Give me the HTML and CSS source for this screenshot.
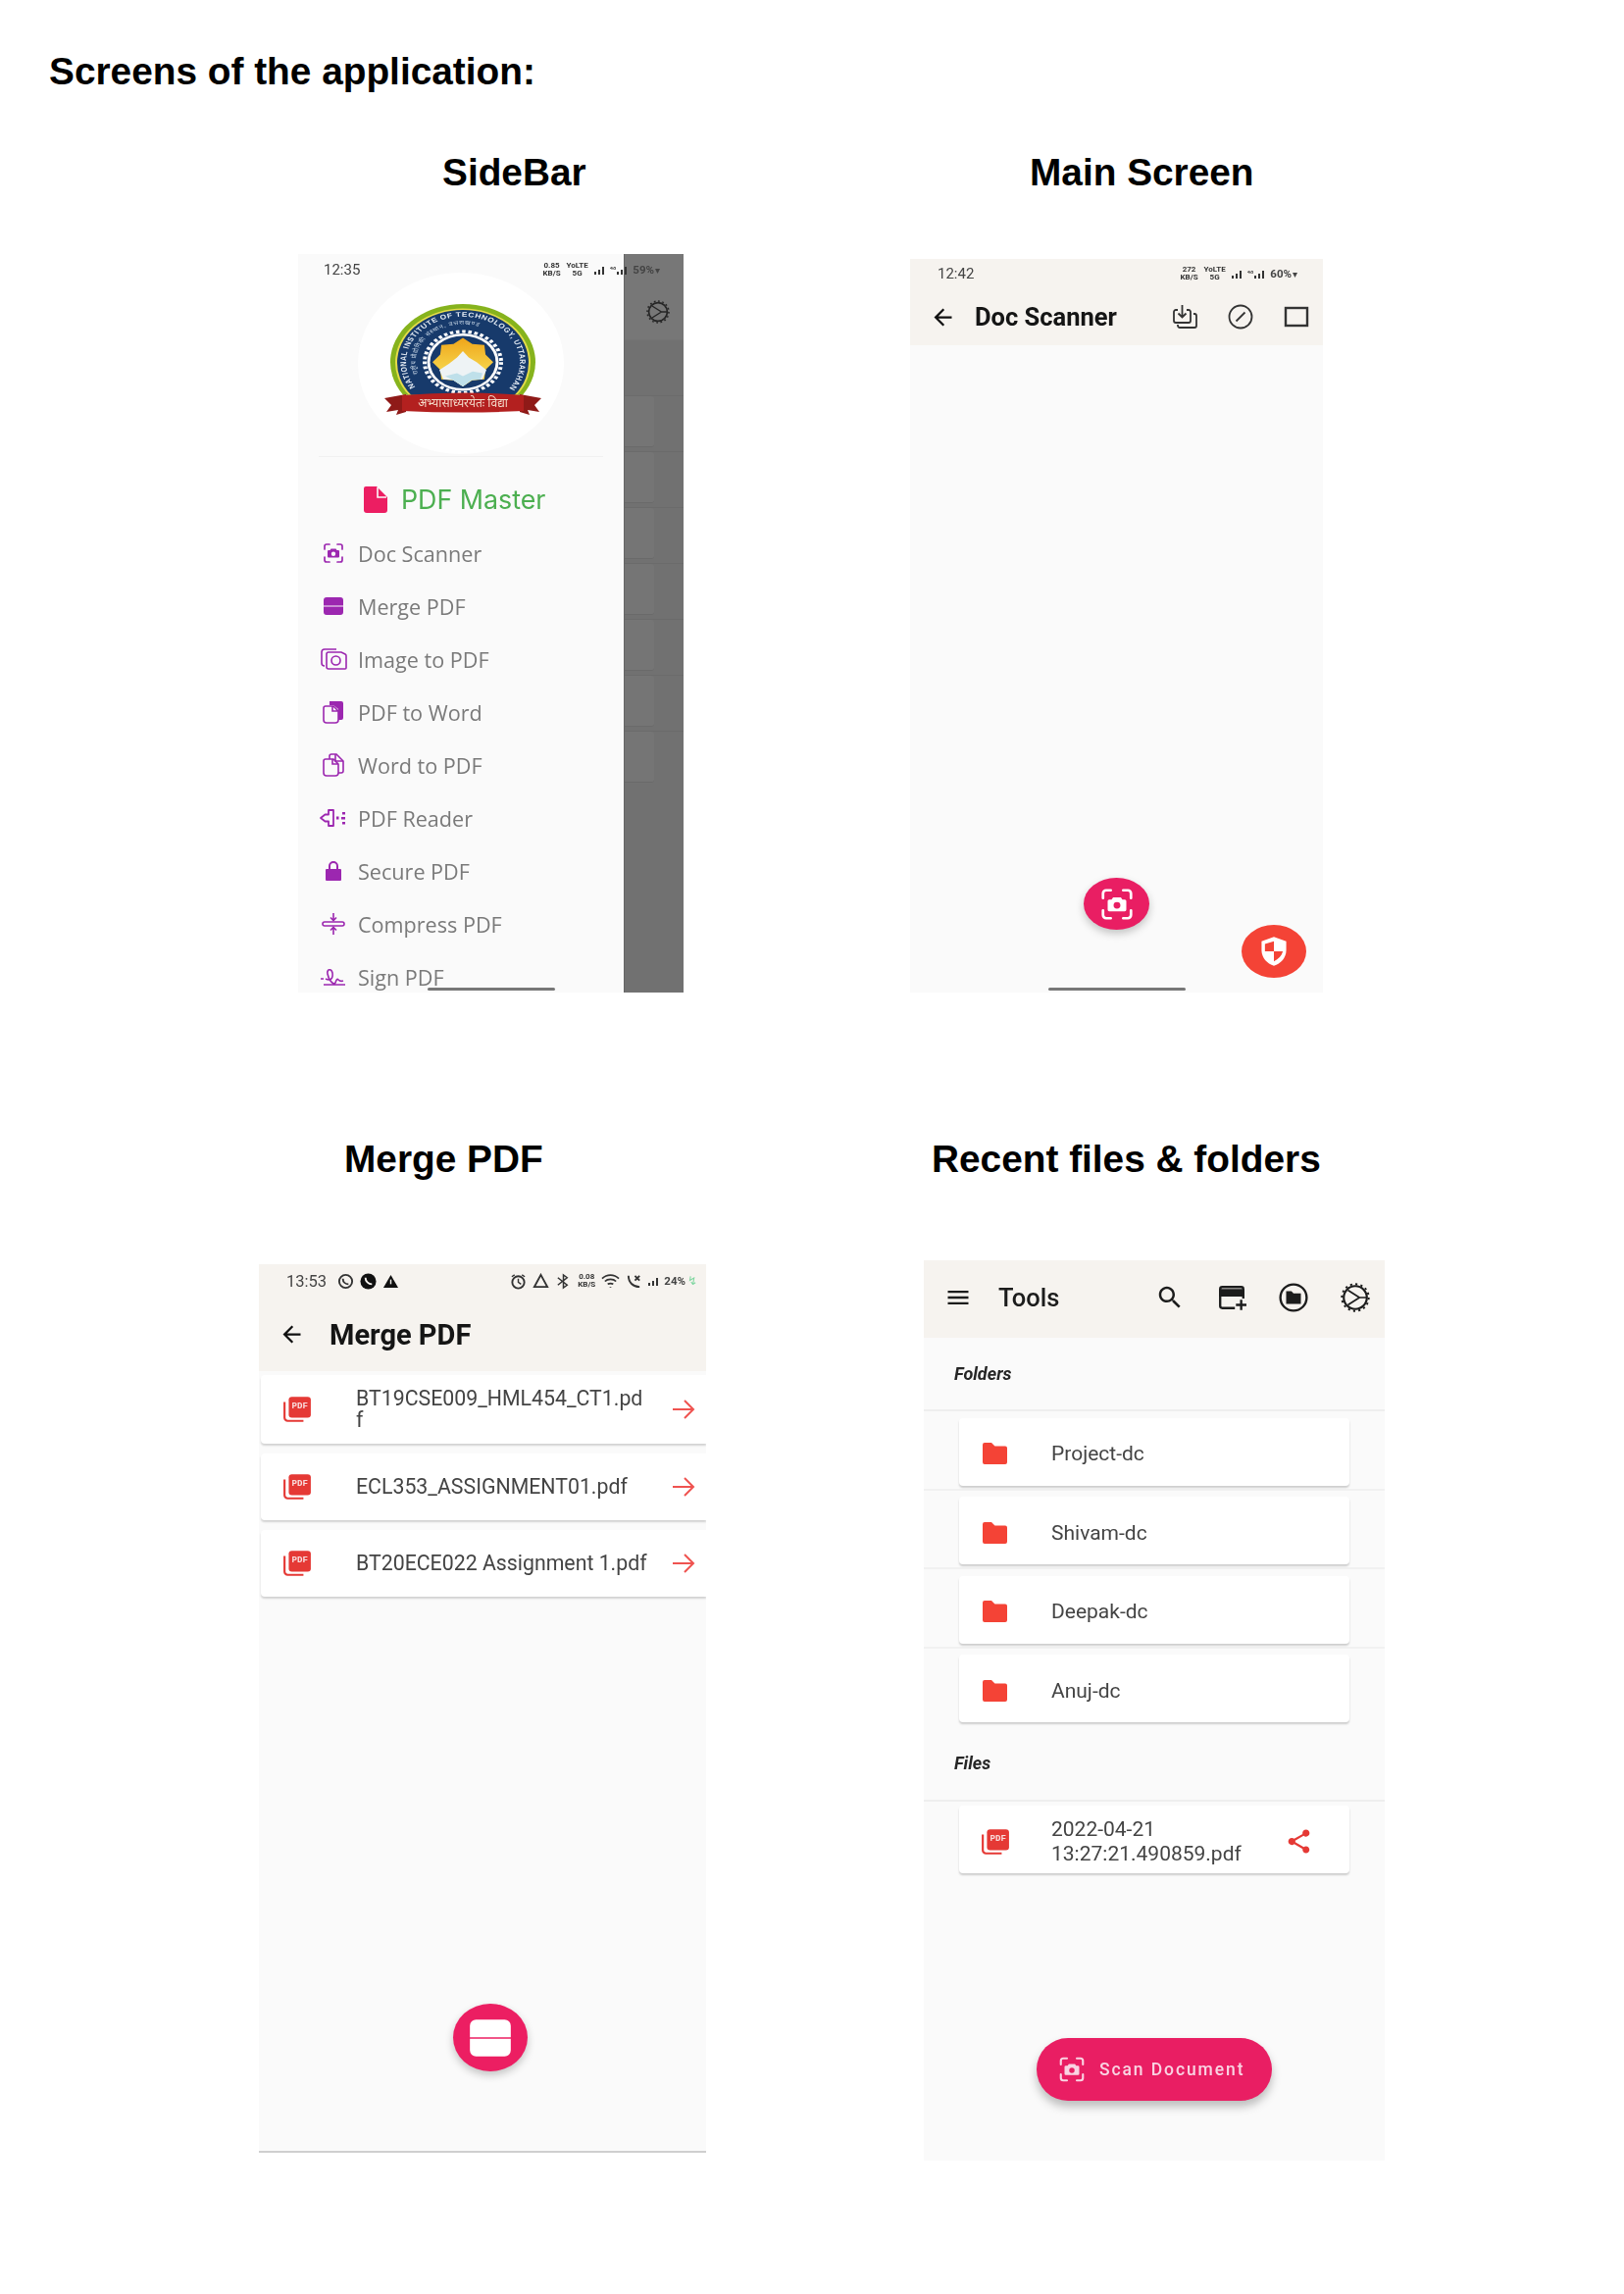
FILE: index.html
```html
<!DOCTYPE html>
<html lang="en">
<head>
    <meta charset="UTF-8">
    <meta name="viewport" content="width=device-width, initial-scale=1.0">
    <title>Screens of the application</title>
    <link rel="stylesheet" href="styles.css">
</head>
<body>
    <svg class="defs" width="0" height="0">
        <symbol id="i-back" viewBox="0 0 24 24"><path d="M20 11H7.830l5.590-5.590L12 4l-8 8 8 8 1.410-1.410L7.830 13H20v-2z"/></symbol>
        <symbol id="i-scan" viewBox="0 0 24 24">
            <path d="M3 8V5a2 2 0 0 1 2-2h3M16 3h3a2 2 0 0 1 2 2v3M21 16v3a2 2 0 0 1-2 2h-3M8 21H5a2 2 0 0 1-2-2v-3" fill="none" stroke="currentColor" stroke-width="1.700" stroke-linecap="round"/>
            <path fill="currentColor" fill-rule="evenodd" d="M9.500 7.500l-1 1.500H7a1 1 0 0 0-1 1v5.500a1 1 0 0 0 1 1h10a1 1 0 0 0 1-1V10a1 1 0 0 0-1-1h-1.500l-1-1.500zM12 10.500a2.200 2.200 0 1 1 0 4.400 2.200 2.200 0 0 1 0-4.400z"/>
        </symbol>
        <symbol id="i-merge" viewBox="0 0 24 24"><path fill="currentColor" d="M5 3h14a3 3 0 0 1 3 3v5.600H2V6a3 3 0 0 1 3-3zM2 12.400h20V18a3 3 0 0 1-3 3H5a3 3 0 0 1-3-3z"/></symbol>
        <symbol id="i-next" viewBox="0 0 24 24"><path d="M1 12h21M13 3l9 9-9 9" fill="none" stroke="#ef5350" stroke-width="2"/></symbol>
        <symbol id="i-folder" viewBox="0 0 27 24"><path fill="#f44336" d="M3 1h7l3.500 3.500H24a2 2 0 0 1 2 2V21a2 2 0 0 1-2 2H3a2 2 0 0 1-2-2V3a2 2 0 0 1 2-2z"/></symbol>
        <symbol id="i-gear" viewBox="0 0 28 28">
            <circle cx="14" cy="14" r="11" fill="none" stroke="currentColor" stroke-width="2"/>
            <circle cx="14" cy="14" r="12.800" fill="none" stroke="currentColor" stroke-width="1.800" stroke-dasharray="2 3"/>
            <path d="M7 7l11 7-11 7M18 14h7" fill="none" stroke="currentColor" stroke-width="1.600"/>
        </symbol>
    </svg>

    <h1 class="title">Screens of the application:</h1>

    <section class="row">
        <div class="col">
            <h2 class="heading heading-sidebar">SideBar</h2>
            <div class="phone phone-sidebar">
                <div class="scrim">
                    <div class="scrim-head"></div>
                    <div class="ghost"><i></i></div>
                    <div class="ghost"><i></i></div>
                    <div class="ghost"><i></i></div>
                    <div class="ghost"><i></i></div>
                    <div class="ghost"><i></i></div>
                    <div class="ghost"><i></i></div>
                    <div class="ghost"><i></i></div>
                </div>
                <svg class="scrim-gear"><use href="#i-gear"/></svg>
                <div class="status status-sidebar">
                    <span class="time">12:35</span>
                    <span class="stat-right">
                        <span class="speed">0.85<br>KB/S</span><span class="speed">YoLTE<br>5G</span>
                        <span class="bars"><b></b><b></b><b></b></span><span class="tiny">⁴⁶</span><span class="bars"><b></b><b></b><b></b></span>
                        <span class="pct">59%</span><span class="batt">▾</span>
                    </span>
                </div>
                <nav class="drawer">
                    <div class="logo-wrap">
                        <div class="logo">
                            <svg class="emblem" viewBox="0 0 160 113">
                                <defs>
                                    <linearGradient id="sun" x1="0" y1="0" x2="0" y2="1">
                                        <stop offset="0" stop-color="#efa51a"/>
                                        <stop offset="0.6" stop-color="#f5cf45"/>
                                    </linearGradient>
                                    <path id="ring-outer" d="M33 108A58 58 0 1 1 127 108"/>
                                    <path id="ring-inner" d="M42.500 104A48 48 0 1 1 117.500 104"/>
                                </defs>
                                <g transform="scale(1 .8)">
                                    <path d="M19.100 116A74 74 0 1 1 140.900 116z" fill="#86b31d"/>
                                    <path d="M24.800 116A69 69 0 1 1 135.200 116z" fill="#e4dc4a"/>
                                    <path d="M27.300 116A67 67 0 1 1 132.700 116z" fill="#173a6b"/>
                                    <text class="ring-label"><textPath href="#ring-outer" startOffset="1%">NATIONAL INSTITUTE OF TECHNOLOGY, UTTARAKHAND</textPath></text>
                                    <text class="ring-hindi"><textPath href="#ring-inner" startOffset="8%">राष्ट्रीय प्रौद्योगिकी संस्थान, उत्तराखण्ड</textPath></text>
                                    <circle cx="80" cy="74" r="39" fill="none" stroke="#fff" stroke-width="4" stroke-dasharray="3.500 2.800"/>
                                    <circle cx="80" cy="74" r="36.500" fill="#fff"/>
                                    <circle cx="80" cy="74" r="33.500" fill="#173a6b"/>
                                    <polygon fill="url(#sun)" points="80,43 89.600,50.900 101.900,52.100 103.100,64.400 111,74 103.100,83.600 101.900,95.900 89.600,97.100 80,105 70.400,97.100 58.100,95.900 56.900,83.600 49,74 56.900,64.400 58.100,52.100 70.400,50.900"/>
                                    <polygon fill="#eef3f5" points="56,84 66,76 74,68 80,60 86,68 94,74 104,84 100,96 89,97 80,105 70,97 60,96"/>
                                    <polygon fill="#bfe0ea" points="62,92 74,88 80,92 90,86 100,88 98,96 89,97 80,105 70,97"/>
                                </g>
                                <path d="M0 96l22-4v18l-10 3 2-5-12 2 5-7z" fill="#8f1a18"/>
                                <path d="M160 96l-22-4v18l10 3-2-5 12 2-5-7z" fill="#8f1a18"/>
                                <path d="M18 93q62-5 124 0v16q-62 3-124 0z" fill="#b3201f"/>
                                <text x="80" y="105" class="ribbon-label">अभ्यासाध्यरयेतः विद्या</text>
                            </svg>
                        </div>
                    </div>
                    <div class="brand">
                        <svg class="brand-icon" viewBox="0 0 24 27"><path fill="#ec1e62" d="M2 0h11l11 11v13a3 3 0 0 1-3 3H3a3 3 0 0 1-3-3V2a2 2 0 0 1 2-2z"/><path d="M14 1v10h9" fill="none" stroke="#fafafa" stroke-width="1.600"/></svg>
                        <span>PDF Master</span>
                    </div>
                    <a class="menu-item"><svg class="menu-icon"><use href="#i-scan"/></svg>Doc Scanner</a>
                    <a class="menu-item"><svg class="menu-icon"><use href="#i-merge"/></svg>Merge PDF</a>
                    <a class="menu-item">
                        <svg class="menu-icon" viewBox="0 0 28 24"><g fill="none" stroke="currentColor" stroke-width="1.600"><path d="M5 19a3 3 0 0 1-3-3V5a3 3 0 0 1 3-3h12"/><path d="M9 5h13l4 2a2 2 0 0 1 1 2v12a1 1 0 0 1-1 1H9a2 2 0 0 1-2-2V7a2 2 0 0 1 2-2z"/><circle cx="16.500" cy="13.500" r="4.500"/></g></svg>
                        Image to PDF
                    </a>
                    <a class="menu-item">
                        <svg class="menu-icon" viewBox="0 0 24 24"><path fill="currentColor" d="M8 1h12a2 2 0 0 1 2 2v15a2 2 0 0 1-2 2h-3V9l-5-4H8z"/><path d="M4 6h8l5 5v9a3 3 0 0 1-3 3H5a3 3 0 0 1-3-3V8a2 2 0 0 1 2-2zM11 6v5h6" fill="none" stroke="currentColor" stroke-width="1.600"/></svg>
                        PDF to Word
                    </a>
                    <a class="menu-item">
                        <svg class="menu-icon" viewBox="0 0 24 24"><g fill="none" stroke="currentColor" stroke-width="1.600"><path d="M8 6V3a2 2 0 0 1 2-2h5l7 7v10a2 2 0 0 1-2 2h-3"/><path d="M14 1v7h8"/><path d="M4 6h8l5 5v9a3 3 0 0 1-3 3H5a3 3 0 0 1-3-3V8a2 2 0 0 1 2-2zM11 6v5h6"/></g></svg>
                        Word to PDF
                    </a>
                    <a class="menu-item">
                        <svg class="menu-icon" viewBox="0 0 28 24"><path d="M1 12l4.500-3.500H9V4l5 0v16l-5 0v-4.500H5.500z" fill="none" stroke="currentColor" stroke-width="1.800" stroke-linejoin="round"/><path fill="currentColor" d="M17 10.500h2.500v3H17zM23 6h3v2.500h-3zM22 11h4v2.500h-4zM23 16h3v2.500h-3z"/></svg>
                        PDF Reader
                    </a>
                    <a class="menu-item">
                        <svg class="menu-icon" viewBox="0 0 24 24"><path d="M8 11V7a4 4 0 0 1 8 0v4" fill="none" stroke="currentColor" stroke-width="2"/><path fill="currentColor" d="M5 10h14a1 1 0 0 1 1 1v10a1 1 0 0 1-1 1H5a1 1 0 0 1-1-1V11a1 1 0 0 1 1-1z"/></svg>
                        Secure PDF
                    </a>
                    <a class="menu-item">
                        <svg class="menu-icon" viewBox="0 0 24 24"><g fill="none" stroke="currentColor" stroke-width="1.600"><rect x="1" y="10" width="22" height="4" rx="2"/><path d="M12 1v7M9 5.500L12 8.500l3-3M12 23v-7M9 18.500l3-3 3 3"/></g></svg>
                        Compress PDF
                    </a>
                    <a class="menu-item">
                        <svg class="menu-icon" viewBox="0 0 28 24"><path d="M1 14h3M6 14c4 2 8 1 7-6-1-5-6-4-5 1 1 6 6 12 8 9 1-3 2-5 3-3 1 1 2 2 5 1M4 20h22" fill="none" stroke="currentColor" stroke-width="1.600"/></svg>
                        Sign PDF
                    </a>
                </nav>
                <div class="home-bar home-sidebar"></div>
            </div>
        </div>

        <div class="col">
            <h2 class="heading heading-main">Main Screen</h2>
            <div class="phone phone-main">
                <div class="appbar appbar-main">
                    <div class="status status-main">
                        <span class="time">12:42</span>
                        <span class="stat-right">
                            <span class="speed">272<br>KB/S</span><span class="speed">YoLTE<br>5G</span>
                            <span class="bars"><b></b><b></b><b></b></span><span class="tiny">⁴⁶</span><span class="bars"><b></b><b></b><b></b></span>
                            <span class="pct">60%</span><span class="batt">▾</span>
                        </span>
                    </div>
                    <div class="bar-row">
                        <svg class="bar-back"><use href="#i-back"/></svg>
                        <span class="bar-title">Doc Scanner</span>
                        <span class="bar-actions">
                            <svg class="bar-icon" viewBox="0 0 28 28"><path d="M7 7H5a2 2 0 0 0-2 2v9a2 2 0 0 0 2 2h13a2 2 0 0 0 2-2V9a2 2 0 0 0-2-2h-2M11.500 2v12M7.500 10.500l4 4 4-4M23 11h1a2 2 0 0 1 2 2v10a2 2 0 0 1-2 2H9a2 2 0 0 1-2-2v-1" fill="none" stroke="#333" stroke-width="1.800"/></svg>
                            <svg class="bar-icon" viewBox="0 0 28 28"><circle cx="14" cy="14" r="11.500" fill="none" stroke="#333" stroke-width="1.800"/><path d="M9.500 18.500l9-9" stroke="#333" stroke-width="1.800"/></svg>
                            <svg class="bar-icon" viewBox="0 0 28 28"><rect x="3" y="5" width="22" height="18" fill="none" stroke="#333" stroke-width="2.400"/></svg>
                        </span>
                    </div>
                </div>
                <div class="fab fab-scan"><svg><use href="#i-scan"/></svg></div>
                <div class="fab fab-shield">
                    <svg viewBox="0 0 24 28"><path fill="#fff" d="M12 1l11 4v8c0 7-5 12-11 14C6 25 1 20 1 13V5z"/><path fill="#f44336" d="M12 5v9H4V7.500zM12 14h8c-1 4-4 7-8 9z"/></svg>
                </div>
                <div class="home-bar home-main"></div>
            </div>
        </div>
    </section>

    <section class="row row-second">
        <div class="col">
            <h2 class="heading heading-merge">Merge PDF</h2>
            <div class="phone phone-merge">
                <div class="appbar appbar-merge">
                    <div class="status status-merge">
                        <span class="time">13:53</span>
                        <svg class="note" viewBox="0 0 18 18"><circle cx="9" cy="9" r="7" fill="none" stroke="#333" stroke-width="2"/><path d="M6 6c0 4 3 6 6 6" fill="none" stroke="#333" stroke-width="2"/></svg>
                        <svg class="note" viewBox="0 0 18 18"><circle cx="9" cy="9" r="8.500" fill="#111"/><path d="M6 5c0 4 3 7 7 7" fill="none" stroke="#f6f3ef" stroke-width="2"/></svg>
                        <svg class="note" viewBox="0 0 18 18"><path d="M9 2l8 14H1z" fill="#111"/><path d="M9 7v5" stroke="#f6f3ef" stroke-width="1.500"/></svg>
                        <span class="stat-right">
                            <svg class="note" viewBox="0 0 18 18"><circle cx="9" cy="10" r="6.500" fill="none" stroke="#333" stroke-width="2"/><path d="M9 6v4l3 2M2 4l3-2M16 4l-3-2" fill="none" stroke="#333" stroke-width="1.500"/></svg>
                            <svg class="note" viewBox="0 0 18 18"><path d="M9 2l7 13H2z" fill="none" stroke="#333" stroke-width="2"/></svg>
                            <svg class="note" viewBox="0 0 18 18"><path d="M3 5l10 8-4 3V2l4 3L3 13" fill="none" stroke="#333" stroke-width="1.600"/></svg>
                            <span class="speed">0.08<br>KB/S</span>
                            <svg class="note note-wide" viewBox="0 0 20 18"><path d="M1 6c5-5 13-5 18 0M4 9c3-3 9-3 12 0M7 12c2-1 4-1 6 0M10 15v1" fill="none" stroke="#333" stroke-width="1.800"/></svg>
                            <svg class="note" viewBox="0 0 18 18"><path d="M3 3c0 7 5 12 12 12M10 3l5 5M15 3l-5 5" fill="none" stroke="#333" stroke-width="2"/></svg>
                            <span class="bars"><b></b><b></b><b></b></span>
                            <span class="pct">24%</span><span class="batt-green">↯</span>
                        </span>
                    </div>
                    <div class="bar-row">
                        <svg class="bar-back"><use href="#i-back"/></svg>
                        <span class="bar-title">Merge PDF</span>
                    </div>
                </div>
                <div class="file-list">
                    <div class="file-card file-tall">
                        <svg class="file-icon" viewBox="0 0 28 28"><path d="M2 7v15a3 3 0 0 0 3 3h15" fill="none" stroke="#e53935" stroke-width="2"/><rect x="6" y="2" width="21" height="20" rx="3" fill="#e53935"/><text x="16.500" y="13.500" class="pdf-label">PDF</text></svg>
                        <span class="file-name">BT19CSE009_HML454_CT1.pd<br>f</span>
                        <svg class="file-next"><use href="#i-next"/></svg>
                    </div>
                    <div class="file-card">
                        <svg class="file-icon" viewBox="0 0 28 28"><path d="M2 7v15a3 3 0 0 0 3 3h15" fill="none" stroke="#e53935" stroke-width="2"/><rect x="6" y="2" width="21" height="20" rx="3" fill="#e53935"/><text x="16.500" y="13.500" class="pdf-label">PDF</text></svg>
                        <span class="file-name">ECL353_ASSIGNMENT01.pdf</span>
                        <svg class="file-next"><use href="#i-next"/></svg>
                    </div>
                    <div class="file-card">
                        <svg class="file-icon" viewBox="0 0 28 28"><path d="M2 7v15a3 3 0 0 0 3 3h15" fill="none" stroke="#e53935" stroke-width="2"/><rect x="6" y="2" width="21" height="20" rx="3" fill="#e53935"/><text x="16.500" y="13.500" class="pdf-label">PDF</text></svg>
                        <span class="file-name">BT20ECE022 Assignment 1.pdf</span>
                        <svg class="file-next"><use href="#i-next"/></svg>
                    </div>
                </div>
                <div class="fab fab-merge"><svg><use href="#i-merge"/></svg></div>
            </div>
        </div>

        <div class="col">
            <h2 class="heading heading-recent">Recent files &amp; folders</h2>
            <div class="phone phone-tools">
                <div class="tools-bar">
                    <svg class="tools-menu" viewBox="0 0 24 24"><path d="M3 18h18v-2H3v2zm0-5h18v-2H3v2zm0-7v2h18V6H3z"/></svg>
                    <span class="tools-title">Tools</span>
                    <span class="tools-actions">
                        <svg viewBox="0 0 24 24"><path d="M15.500 14h-.79l-.28-.27C15.410 12.590 16 11.110 16 9.500 16 5.910 13.090 3 9.500 3S3 5.910 3 9.500 5.910 16 9.500 16c1.610 0 3.090-.59 4.230-1.570l.27.28v.79l5 4.990L20.490 19l-4.990-5zm-6 0C7.010 14 5 11.990 5 9.500S7.010 5 9.500 5 14 7.010 14 9.500 11.990 14 9.500 14z"/></svg>
                        <svg viewBox="0 0 28 28"><path d="M25 15V6a2 2 0 0 0-2-2H5a2 2 0 0 0-2 2v16a2 2 0 0 0 2 2h12" fill="none" stroke="#1c1c1c" stroke-width="2.200"/><path d="M3 7h22v5H3zM23 16v10M18 21h10" fill="#1c1c1c" stroke="#1c1c1c" stroke-width="2.200"/></svg>
                        <svg viewBox="0 0 28 28"><circle cx="14" cy="14" r="12.500" fill="none" stroke="#1c1c1c" stroke-width="2.200"/><path fill="#1c1c1c" d="M7 8h5l2 2h7v10H7z"/></svg>
                        <svg><use href="#i-gear"/></svg>
                    </span>
                </div>
                <div class="section-label">Folders</div>
                <div class="card-row"><div class="tool-card"><svg class="folder"><use href="#i-folder"/></svg><span class="tool-name">Project-dc</span></div></div>
                <div class="card-row"><div class="tool-card"><svg class="folder"><use href="#i-folder"/></svg><span class="tool-name">Shivam-dc</span></div></div>
                <div class="card-row"><div class="tool-card"><svg class="folder"><use href="#i-folder"/></svg><span class="tool-name">Deepak-dc</span></div></div>
                <div class="card-row card-last"><div class="tool-card"><svg class="folder"><use href="#i-folder"/></svg><span class="tool-name">Anuj-dc</span></div></div>
                <div class="section-label section-files">Files</div>
                <div class="card-row card-file card-last">
                    <div class="tool-card">
                        <svg class="file-icon file-icon-tool" viewBox="0 0 28 28"><path d="M2 7v15a3 3 0 0 0 3 3h15" fill="none" stroke="#e53935" stroke-width="2"/><rect x="6" y="2" width="21" height="20" rx="3" fill="#e53935"/><text x="16.500" y="13.500" class="pdf-label">PDF</text></svg>
                        <span class="tool-name tool-file">2022-04-21<br>13:27:21.490859.pdf</span>
                        <svg class="share" viewBox="0 0 24 24"><path d="M18 16.080c-.76 0-1.440.3-1.960.77L8.910 12.700c.05-.23.09-.46.09-.7s-.04-.47-.09-.7l7.050-4.110c.54.5 1.250.81 2.040.81 1.660 0 3-1.340 3-3s-1.340-3-3-3-3 1.340-3 3c0 .24.04.47.09.7L8.040 9.810C7.500 9.310 6.790 9 6 9c-1.660 0-3 1.340-3 3s1.340 3 3 3c.79 0 1.500-.31 2.040-.81l7.120 4.160c-.05.21-.08.43-.08.65 0 1.610 1.310 2.920 2.920 2.920s2.920-1.310 2.920-2.920-1.310-2.920-2.920-2.920z"/></svg>
                    </div>
                </div>
                <div class="fab-wide"><svg><use href="#i-scan"/></svg><span>Scan Document</span></div>
            </div>
        </div>
    </section>
</body>
</html>
```

FILE: styles.css
```css
* { box-sizing: border-box; }

body {
    margin: 0;
    height: 2339px;
    background: #fff;
    color: #000;
    font-family: "Liberation Sans", Arial, sans-serif;
    overflow: hidden;
}

.defs { position: absolute; }

.title {
    margin: 0;
    padding: 57px 0 0 50px;
    font-size: 38.800px;
    line-height: 32px;
    font-weight: bold;
}

.row { display: flex; margin-top: 71px; }
.row-second { margin-top: 154px; }
.col { flex: 0 0 900px; }
.col:last-child { flex: 0 0 756px; }

.heading {
    margin: 0;
    font-size: 38.800px;
    line-height: 32px;
    font-weight: bold;
    white-space: nowrap;
}
.heading-sidebar { margin-left: 451px; margin-bottom: 67px; }
.heading-main { margin-left: 150px; margin-bottom: 72px; }
.heading-merge { margin-left: 351px; margin-bottom: 91px; }
.heading-recent { margin-left: 50px; margin-bottom: 87px; }

/* phone shots */
.phone {
    position: relative;
    background: #fafafa;
    overflow: hidden;
    filter: blur(0.6px);
    font-family: Roboto, sans-serif;
}
.phone-sidebar { margin-left: 304px; width: 393px; height: 753px; }
.phone-main { margin-left: 28px; width: 421px; height: 748px; }
.phone-merge { margin-left: 264px; width: 456px; height: 906px; border-bottom: 2px solid #cfcfcf; }
.phone-tools { margin-left: 42px; width: 470px; height: 918px; }

/* status bars */
.status {
    display: flex;
    align-items: center;
    height: 30px;
    font-size: 15px;
    color: #444;
}
.status-sidebar { position: absolute; top: 1px; left: 26px; right: 24px; z-index: 2; }
.status-main { padding: 0 26px 0 28px; }
.status-merge { padding: 0 9px 0 28px; gap: 6px; height: 34px; }
.status-merge .time { margin-right: 5px; font-size: 16.500px; }
.stat-right { margin-left: auto; display: flex; align-items: center; gap: 6px; }
.speed { font-size: 8px; line-height: 8px; font-weight: bold; text-align: center; color: #333; }
.tiny { font-size: 9px; margin-right: -5px; color: #333; }
.pct { font-size: 11.500px; font-weight: bold; color: #444; }
.batt { font-size: 10px; margin-left: -5px; }
.batt-green { color: #7fd6a0; font-size: 12px; margin-left: -4px; }
.bars { display: flex; align-items: flex-end; gap: 2px; height: 9px; }
.bars b { width: 2px; height: 3px; background: #333; }
.bars b:nth-child(2) { height: 5px; }
.bars b:nth-child(3) { height: 8px; }
.note { width: 17px; height: 17px; }
.note-wide { width: 19px; }

/* sidebar screen */
.drawer {
    width: 332px;
    height: 100%;
    background: #fafafa;
    display: flex;
    flex-direction: column;
}
.logo-wrap {
    flex: none;
    height: 207px;
    margin: 0 21px;
    padding: 19px 0 0 40px;
    border-bottom: 1px solid #f1f1f1;
}
.logo {
    width: 210px;
    height: 185px;
    border-radius: 50%;
    background: #fff;
    display: flex;
    justify-content: center;
    padding: 32px 0 0 3px;
}
.emblem { width: 160px; height: 113px; overflow: visible; }
.ring-label { font: bold 8.400px "Liberation Sans", sans-serif; fill: #e6edf5; letter-spacing: 0.600px; }
.ring-hindi { font: 7px "Noto Sans", "DejaVu Sans", sans-serif; fill: #c9d8e8; letter-spacing: 0.800px; }
.ribbon-label { font: 12px "Noto Sans", "DejaVu Sans", sans-serif; fill: #f3d9c8; text-anchor: middle; }
.brand {
    flex: none;
    display: flex;
    align-items: center;
    gap: 14px;
    height: 40px;
    margin-top: 23px;
    padding-left: 67px;
    color: #4caf50;
    font: 400 26.800px Inter, sans-serif;
}
.brand-icon { width: 24px; height: 27px; }
.menu-item {
    display: flex;
    align-items: center;
    flex: 0 0 54px;
    padding-left: 22px;
    color: #7a7a7a;
    font: 21.600px "Open Sans", sans-serif;
}
.brand + .menu-item { margin-top: 8px; }
.menu-icon {
    flex: none;
    width: 28px;
    height: 24px;
    margin-right: 11px;
    color: #9c27b0;
}

.scrim {
    position: absolute;
    top: 0;
    left: 332px;
    right: 0;
    bottom: 0;
    background: #717171;
    border-left: 1px solid #666;
}
.scrim-head { height: 88px; background: #777; border-bottom: 1px solid #747474; margin-bottom: 56px; }
.ghost { height: 57px; border-top: 1px solid #6b6b6b; padding-bottom: 4px; }
.ghost i { display: block; width: 30px; height: 52px; background: #757575; border-radius: 0 3px 3px 0; border-bottom: 1px solid #6a6a6a; }
.scrim-gear { position: absolute; top: 47px; left: 355px; width: 24px; height: 24px; color: #262626; }

.home-bar { position: absolute; height: 3px; background: #777; border-radius: 2px; }
.home-sidebar { left: 132px; width: 130px; bottom: 2px; }
.home-main { left: 141px; width: 140px; bottom: 2px; }

/* app bars */
.appbar { background: #f6f3ef; }
.appbar-main { height: 88px; }
.appbar-merge { height: 109px; }
.bar-row { display: flex; align-items: center; height: 58px; }
.appbar-merge .bar-row { height: 75px; }
.bar-back { width: 27px; height: 27px; margin-left: 20px; fill: #111; }
.bar-title { margin-left: 19px; font-size: 25.500px; font-weight: 700; color: #151515; }
.appbar-merge .bar-title { margin-left: 25px; font-size: 29px; }
.bar-actions { margin-left: auto; display: flex; gap: 29px; padding-right: 13px; }
.bar-icon { width: 28px; height: 28px; }

/* floating buttons */
.fab {
    position: absolute;
    border-radius: 50%;
    display: flex;
    align-items: center;
    justify-content: center;
    color: #fff;
    box-shadow: 0 4px 8px rgba(0, 0, 0, .22);
}
.fab-scan { left: 177px; top: 631px; width: 67px; height: 53px; background: #e91e63; }
.fab-scan svg { width: 38px; height: 38px; }
.fab-shield { left: 338px; top: 679px; width: 66px; height: 54px; background: #f44336; box-shadow: none; }
.fab-shield svg { width: 28px; height: 32px; }
.fab-merge { left: 198px; top: 754px; width: 76px; height: 69px; background: #ec1e62; }
.fab-merge svg { width: 50px; height: 50px; }
.fab-wide {
    position: absolute;
    left: 115px;
    top: 793px;
    width: 240px;
    height: 64px;
    border-radius: 32px;
    background: #e91e63;
    color: #f9d3e2;
    display: flex;
    align-items: center;
    padding-left: 21px;
    gap: 13px;
    font-size: 17.500px;
    font-weight: 500;
    letter-spacing: 1.900px;
    box-shadow: 0 6px 10px rgba(0, 0, 0, .25);
}
.fab-wide svg { width: 30px; height: 30px; }

/* merge list */
.file-list { padding: 4px 0 0 2px; display: flex; flex-direction: column; gap: 10px; }
.file-card {
    display: flex;
    align-items: center;
    height: 68px;
    background: #fff;
    border-radius: 4px 0 0 4px;
    box-shadow: 0 2px 2px rgba(0, 0, 0, .16);
}
.file-tall { height: 70px; }
.file-icon { flex: none; width: 30px; height: 30px; margin-left: 22px; }
.file-name { margin-left: 45px; flex: 1; font-size: 21.300px; line-height: 22px; color: #444; white-space: nowrap; }
.file-next { width: 24px; height: 24px; margin-right: 11px; }
.pdf-label { font: bold 8.500px "Liberation Mono", monospace; fill: #f9dcdc; text-anchor: middle; }

/* tools screen */
.tools-bar {
    display: flex;
    align-items: center;
    height: 79px;
    background: #f6f3ef;
    padding: 0 15px 4px 21px;
}
.tools-menu { width: 28px; height: 28px; fill: #1c1c1c; }
.tools-title { margin-left: 27px; font-size: 25.500px; font-weight: 500; color: #1c1c1c; }
.tools-actions { margin-left: auto; display: flex; align-items: center; gap: 33px; color: #1c1c1c; fill: #1c1c1c; }
.tools-actions svg { width: 30px; height: 30px; }
.section-label {
    height: 75px;
    padding: 0 0 0 31px;
    display: flex;
    align-items: center;
    border-bottom: 2px solid #eeeeee;
    font-size: 18px;
    font-weight: 700;
    font-style: italic;
    color: #262626;
}
.section-files { height: 78px; }
.card-row { padding: 6.500px 36px 3px; border-bottom: 2px solid #f1f1f1; }
.card-file { padding-top: 4px; }
.card-last { border-bottom: 0; }
.tool-card {
    display: flex;
    align-items: center;
    height: 69px;
    padding-top: 4px;
    background: #fff;
    border-radius: 4px;
    box-shadow: 0 2px 2px rgba(0, 0, 0, .18);
}
.folder { flex: none; width: 27px; height: 24px; margin-left: 23px; }
.file-icon-tool { margin-left: 22px; margin-right: -2px; }
.tool-name { margin-left: 44px; flex: 1; font-size: 21px; color: #444; }
.tool-file { line-height: 25px; }
.share { width: 29px; height: 29px; margin-right: 37px; fill: #e53935; }
```
